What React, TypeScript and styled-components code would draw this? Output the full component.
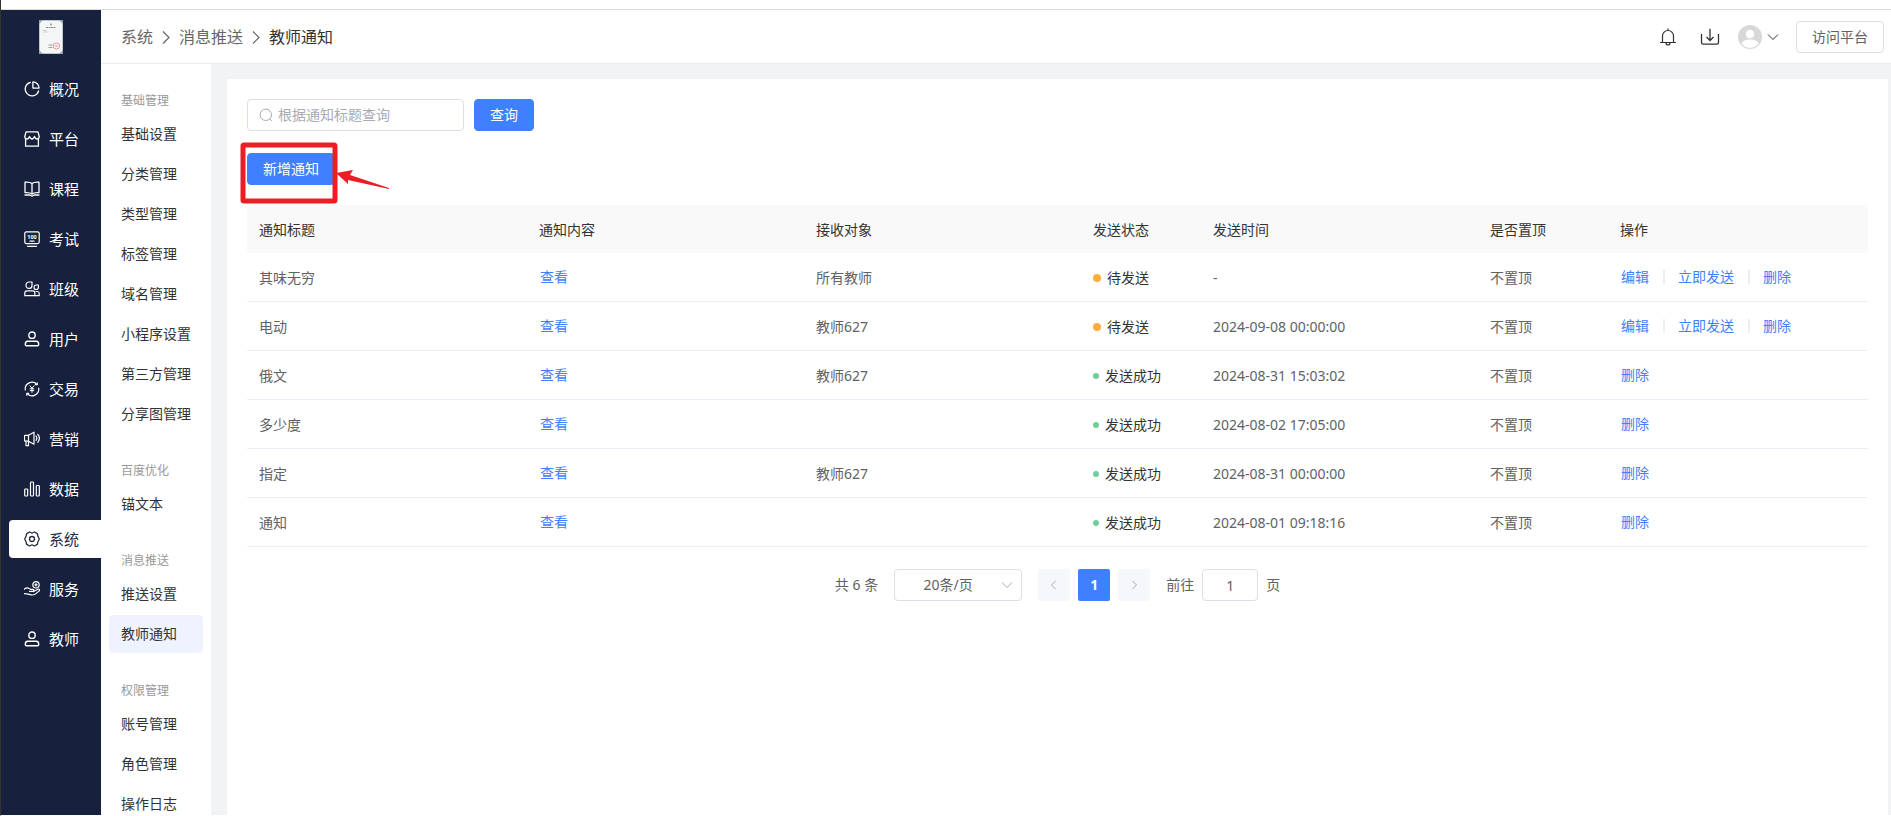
import React from "react";
import styled, { createGlobalStyle, css } from "styled-components";

const GlobalStyle = createGlobalStyle`
  *, *::before, *::after { box-sizing: border-box; }
  body {
    margin: 0;
    background: #fff;
    color: #333;
    font-family: "Noto Sans", "Noto Sans CJK SC", sans-serif;
    font-size: 14px;
    line-height: 20px;
  }
  button, input, select { font: inherit; margin: 0; }
  a { text-decoration: none; }
`;

/* ---------- shell ---------- */

const Shell = styled.div`
  display: flex;
  flex-direction: column;
  height: 100vh;
  overflow: hidden;
  border-left: 1px solid #333;
  border-bottom: 1px solid #fff;
`;

const TopEdge = styled.div`
  flex: none;
  height: 10px;
  border-bottom: 1px solid #dcdcdf;
`;

const Frame = styled.div`
  flex: 1;
  min-height: 0;
  display: flex;
`;

const Sidebar = styled.aside`
  flex: none;
  width: 100px;
  background: #17203d;
`;

const Logo = styled.a`
  display: flex;
  justify-content: center;
  height: 60px;
  padding-top: 10px;
`;

const MainNav = styled.nav`
  display: flex;
  flex-direction: column;
  gap: 12px;
  padding-left: 8px;
`;

const MainLink = styled.a<{ $active?: boolean }>`
  display: flex;
  align-items: center;
  gap: 9px;
  height: 38px;
  padding-left: 15px;
  border-radius: 4px 0 0 4px;
  font-size: 15px;
  color: ${(p) => (p.$active ? "#262d40" : "#fff")};
  background: ${(p) => (p.$active ? "#fff" : "transparent")};
`;

const Workspace = styled.div`
  flex: 1;
  min-width: 0;
  display: flex;
  flex-direction: column;
`;

const Body = styled.div`
  flex: 1;
  min-height: 0;
  display: flex;
  background: #f1f3f5;
`;

/* ---------- header ---------- */

const Header = styled.header`
  flex: none;
  display: flex;
  align-items: center;
  justify-content: space-between;
  height: 54px;
  padding: 0 7px 0 20px;
  border-bottom: 1px solid #ebedf2;
`;

const Crumbs = styled.nav`
  display: flex;
  align-items: center;
  gap: 8px;
  font-size: 16px;
  line-height: 24px;
  color: #333;

  a { color: #666; }
`;

const Tools = styled.div`
  display: flex;
  align-items: center;
`;

const IconButton = styled.button<{ $gap: number }>`
  display: flex;
  align-items: center;
  gap: 5px;
  padding: 0;
  border: 0;
  background: none;
  color: #333;
  cursor: pointer;
  margin-right: ${(p) => p.$gap}px;
`;

const Button = styled.button<{ $primary?: boolean }>`
  height: 32px;
  padding: 0 15px;
  border: 1px solid #dcdfe6;
  border-radius: 4px;
  background: #fff;
  color: #606266;
  cursor: pointer;
  ${(p) =>
    p.$primary &&
    css`
      border-color: #3e80ff;
      background: #3e80ff;
      color: #fff;
    `}
`;

/* ---------- secondary menu ---------- */

const SubMenu = styled.nav`
  flex: none;
  display: flex;
  flex-direction: column;
  gap: 26px;
  width: 110px;
  padding: 25px 8px;
  background: #fff;
  overflow-y: auto;
  scrollbar-width: none;
`;

const Group = styled.section`
  flex: none;
  display: flex;
  flex-direction: column;
  gap: 2px;
`;

const GroupTitle = styled.h2`
  margin: 0;
  padding-left: 12px;
  font-size: 12px;
  font-weight: 400;
  line-height: 24px;
  color: #999;
`;

const SubLink = styled.a<{ $active?: boolean }>`
  display: flex;
  align-items: center;
  height: 38px;
  padding-left: 12px;
  border-radius: 4px;
  white-space: nowrap;
  color: #333;
  background: ${(p) => (p.$active ? "#eff3ff" : "transparent")};
`;

/* ---------- content ---------- */

const Card = styled.main`
  flex: 1;
  min-width: 0;
  margin: 15px 3px 0 16px;
  padding: 20px;
  background: #fff;
  overflow: auto;
`;

const SearchRow = styled.form`
  display: flex;
  gap: 10px;
  margin-bottom: 22px;
`;

const SearchBox = styled.label`
  display: flex;
  align-items: center;
  gap: 5px;
  width: 217px;
  height: 32px;
  padding: 0 11px;
  border: 1px solid #dcdfe6;
  border-radius: 4px;
  color: #a8abb2;

  input {
    flex: 1;
    min-width: 0;
    padding: 0;
    border: 0;
    outline: 0;
    background: none;
    color: #606266;
  }
  input::placeholder { color: #a8abb2; opacity: 1; }
`;

const AddRow = styled.div`
  display: flex;
  margin-bottom: 20px;
`;

const Highlighted = styled.div`
  position: relative;
  display: flex;
`;

const Marker = styled.svg`
  position: absolute;
  left: -7px;
  top: -11px;
  pointer-events: none;
`;

const Table = styled.table`
  width: 100%;
  table-layout: fixed;
  border-collapse: separate;
  border-spacing: 0;

  th, td {
    padding: 2px 12px 0;
    text-align: left;
    font-weight: 400;
    white-space: nowrap;
  }
  th { height: 48px; background: #f9f9f9; color: #333; }
  td { height: 49px; border-bottom: 1px solid #ebeef5; color: #606266; }
  td:nth-child(2), td:last-child { padding-top: 0; }
`;

const TextLink = styled.a`
  padding-left: 1px;
  color: #3e80ff;
`;

const Status = styled.span<{ $sent: boolean }>`
  display: flex;
  align-items: center;
  gap: 6px;
  color: #333;

  &::before {
    content: "";
    width: ${(p) => (p.$sent ? 6 : 8)}px;
    height: ${(p) => (p.$sent ? 6 : 8)}px;
    border-radius: 50%;
    background: ${(p) => (p.$sent ? "#6fcf97" : "#ffad3b")};
  }
`;

const Actions = styled.div`
  display: flex;
  align-items: center;
`;

const Divider = styled.i`
  width: 2px;
  height: 14px;
  margin: 0 12px 0 14px;
  background: #eee;
`;

const Pager = styled.div`
  display: flex;
  align-items: center;
  justify-content: center;
  gap: 16px;
  margin-top: 22px;
  color: #606266;
`;

const PageGroup = styled.div`
  display: flex;
  align-items: center;
  gap: 8px;
`;

const SizeSelect = styled.span`
  position: relative;
  display: flex;

  select {
    width: 128px;
    height: 32px;
    padding: 0 20px 0 0;
    appearance: none;
    border: 1px solid #dcdfe6;
    border-radius: 4px;
    background: #fff;
    color: #606266;
    text-align: center;
    text-align-last: center;
  }
  svg {
    position: absolute;
    right: 9px;
    top: 10px;
    color: #a8abb2;
    pointer-events: none;
  }
`;

const PageButton = styled.button<{ $current?: boolean }>`
  display: flex;
  align-items: center;
  justify-content: center;
  width: 32px;
  height: 32px;
  padding: 0;
  border: 0;
  border-radius: 2px;
  font-weight: 700;
  background: ${(p) => (p.$current ? "#3e80ff" : "#f5f7fa")};
  color: ${(p) => (p.$current ? "#fff" : "#a8abb2")};
`;

const JumpLabel = styled.label`
  display: flex;
  align-items: center;
  gap: 8px;

  input {
    width: 56px;
    height: 32px;
    padding: 0;
    border: 1px solid #dcdfe6;
    border-radius: 4px;
    color: #606266;
    text-align: center;
  }
`;

/* ---------- drawings ---------- */

const Glyph = ({ children, w = 1.2 }: { children: React.ReactNode; w?: number }) => (
  <svg width="16" height="16" viewBox="0 0 16 16" fill="none" stroke="currentColor"
    strokeWidth={w} strokeLinejoin="round" strokeLinecap="round" aria-hidden="true">
    {children}
  </svg>
);

const person = (
  <Glyph w={1.4}>
    <circle cx="8" cy="4.2" r="3.2" />
    <path d="M3.5 10.2h9c1.2 0 2.2 1.6 2.2 3.2 0 .8-.4 1.3-1.2 1.3h-11c-.8 0-1.2-.5-1.2-1.3 0-1.6 1-3.2 2.2-3.2z" />
  </Glyph>
);

const icons: Record<string, React.ReactNode> = {
  overview: (
    <Glyph w={1.3}>
      <path d="M6.2 1.5A6.8 6.8 0 1 0 14.6 9.8" />
      <path d="M8.9.9v6.2h6.2A6.2 6.2 0 0 0 8.9.9z" />
    </Glyph>
  ),
  platform: (
    <Glyph w={1.3}>
      <path d="M2 .8h12l1.200 4.700c0 1.700-1 2.500-2.200 2.500-1.300 0-2-1-2.500-2.500C10 7 9.200 8 8 8S6 7 5.500 5.500C5 7 4.300 8 3 8 1.800 8 .8 7.200.8 5.500z" />
      <path d="M1.600 8v7.200h12.800V8" />
    </Glyph>
  ),
  course: (
    <Glyph w={1.3}>
      <path d="M8 2.600C6.500 1.200 4 1 1 1.200v10.400c3-.2 5.500.1 7 1.400 1.500-1.300 4-1.600 7-1.400V1.200C12 1 9.500 1.200 8 2.600zM8 2.600V13" />
      <path d="M1 14h4.500c1 0 1.500 1 2.500 1s1.500-1 2.500-1H15" />
    </Glyph>
  ),
  exam: (
    <Glyph w={1.2}>
      <rect x=".8" y=".8" width="14.400" height="11.800" rx="1.500" />
      <path d="M3.500 15.300h9" />
      <path d="M6 10.200h4" />
      <text x="8" y="8" fontSize="5.500" fontWeight="700" textAnchor="middle" fill="currentColor" stroke="none">100</text>
    </Glyph>
  ),
  classes: (
    <Glyph w={1.2}>
      <path d="M2 4.200C2 2.200 3.300 1 5 1h3v3.400c0 1.800-1.300 3-3 3s-3-1.300-3-3.200z" />
      <path d="M10 6.200c0-1.300 1-2.200 2.200-2.200h2.200v2.300c0 1.300-1 2.200-2.200 2.200S10 7.600 10 6.200z" />
      <path d="M3 9.800h6.200c1 0 1.600 1 1.600 2.300v2.600H.8v-2.600C.8 10.800 2 9.800 3 9.800z" />
      <path d="M12 10.500h1.400c1.200 0 1.800.8 1.800 1.900v2.300h-4" />
    </Glyph>
  ),
  user: person,
  trade: (
    <Glyph w={1.2}>
      <path d="M1.300 9A6.800 6.800 0 0 1 13 3.400M14.700 7A6.800 6.800 0 0 1 3 12.600" />
      <path d="M13.200 1.800v1.800h-1.800M2.800 14.200v-1.800h1.800" />
      <path d="M5.900 4.800L8 7.200l2.100-2.400M8 7.200v4.200M6.200 7.800h3.600M6.200 9.600h3.600" strokeWidth="1" />
    </Glyph>
  ),
  marketing: (
    <Glyph w={1.2}>
      <path d="M4.500 4.300L10 1.200v12L4.500 10.200" />
      <path d="M1.200 4.300h3.300v5.900H1.200c-.4 0-.7-.3-.7-.7V5c0-.4.3-.7.7-.7z" />
      <path d="M2 10.200v4.500h2.500v-4.500" />
      <path d="M12 5c.9 1.200.9 3.300 0 4.500M13.800 3.300c2 2.500 2 5.600 0 8" />
    </Glyph>
  ),
  data: (
    <Glyph w={1.2}>
      <rect x=".7" y="8" width="3" height="7" rx=".8" />
      <rect x="6.500" y="1" width="3" height="14" rx=".8" />
      <rect x="12.300" y="4.500" width="3" height="10.500" rx=".8" />
    </Glyph>
  ),
  system: (
    <Glyph w={1.3}>
      <path d="M5 1.200h1.200L8 2.200l1.800-1h1.200l2.500 1.700.3 2.100L15.300 8l-1.500 3-.3 2.100-2.500 1.700H9.800L8 13.800l-1.800 1H5l-2.500-1.700-.3-2.100L.7 8l1.500-3 .3-2.100z" />
      <circle cx="8" cy="8" r="2.500" />
    </Glyph>
  ),
  service: (
    <Glyph w={1.2}>
      <circle cx="12" cy="3.800" r="3.200" />
      <path d="M10.800 3.800h2.400M12 2.600V5" />
      <path d="M0 8.300c1.800-1.500 3.600-2 5.200-.8l1.200.8h2.400c1.500 0 1.500 2 0 2H5.500" />
      <path d="M9.500 10.500l4.300-2.300c1.500-.6 2.400.8 1.400 1.700-2.400 2.300-4.300 4.100-6.700 4.100-2.500 0-4.500-1.300-8-1.300" />
    </Glyph>
  ),
  teacher: person,
};

const LogoArt = () => (
  <svg width="24" height="34" viewBox="0 0 24 34" role="img" aria-label="证书">
    <rect width="24" height="34" fill="#b9c9c9" />
    <rect x="1" y="1" width="22" height="32" fill="#f4f6f6" />
    <path d="M0 0h4L0 4zM24 0h-4l4 4zM0 34h4l-4-4zM24 34h-4l4-4z" fill="#8ea9ac" />
    <circle cx="12" cy="4.500" r="1" fill="#999" />
    <path d="M7 7.500h10" stroke="#888" strokeWidth="1.200" strokeDasharray="2 .5" />
    <path d="M3.500 10.500h4M4.500 12h4" stroke="#bbb" strokeWidth=".7" />
    <path d="M9.500 25h4M9.500 27.500h4" stroke="#888" strokeWidth=".8" />
    <ellipse cx="17.500" cy="26" rx="3.300" ry="3" fill="none" stroke="#e58d92" strokeWidth=".9" />
    <path d="M16 26h3" stroke="#e58d92" />
  </svg>
);

const Chevron = ({ d, size = 12, w = 1.2 }: { d: string; size?: number; w?: number }) => (
  <svg width={size} height={size} viewBox="0 0 12 12" fill="none" stroke="currentColor" strokeWidth={w} aria-hidden="true">
    <path d={d} />
  </svg>
);
const RIGHT = "M4 1l5 5-5 5";
const LEFT = "M8 1L3 6l5 5";
const DOWN = "M1 3.500l5 5 5-5";

const CrumbArrow = () => (
  <svg width="10" height="14" viewBox="0 0 10 14" fill="none" stroke="#666" strokeWidth="1.200" aria-hidden="true">
    <path d="M2 1.500L8 7.500l-6 6" />
  </svg>
);

/* ---------- data ---------- */

const mainItems = [
  ["overview", "概况"], ["platform", "平台"], ["course", "课程"], ["exam", "考试"],
  ["classes", "班级"], ["user", "用户"], ["trade", "交易"], ["marketing", "营销"],
  ["data", "数据"], ["system", "系统"], ["service", "服务"], ["teacher", "教师"],
];

const groups = [
  { title: "基础管理", items: ["基础设置", "分类管理", "类型管理", "标签管理", "域名管理", "小程序设置", "第三方管理", "分享图管理"] },
  { title: "百度优化", items: ["锚文本"] },
  { title: "消息推送", items: ["推送设置", "教师通知"] },
  { title: "权限管理", items: ["账号管理", "角色管理", "操作日志"] },
];

const columns: [string, number?][] = [
  ["通知标题", 280], ["通知内容"], ["接收对象"], ["发送状态", 120],
  ["发送时间"], ["是否置顶", 130], ["操作", 260],
];

const rows = [
  { title: "其味无穷", target: "所有教师", sent: false, time: "-" },
  { title: "电动", target: "教师627", sent: false, time: "2024-09-08 00:00:00" },
  { title: "俄文", target: "教师627", sent: true, time: "2024-08-31 15:03:02" },
  { title: "多少度", target: "", sent: true, time: "2024-08-02 17:05:00" },
  { title: "指定", target: "教师627", sent: true, time: "2024-08-31 00:00:00" },
  { title: "通知", target: "", sent: true, time: "2024-08-01 09:18:16" },
];

export default function App() {
  return (
    <Shell>
      <GlobalStyle />
      <TopEdge />
      <Frame>
        <Sidebar>
          <Logo href="#home"><LogoArt /></Logo>
          <MainNav aria-label="主导航">
            {mainItems.map(([key, label]) => (
              <MainLink key={key} href={`#${key}`} $active={key === "system"}>
                {icons[key]}
                {label}
              </MainLink>
            ))}
          </MainNav>
        </Sidebar>

        <Workspace>
          <Header>
            <Crumbs aria-label="面包屑">
              <a href="#system">系统</a>
              <CrumbArrow />
              <a href="#push">消息推送</a>
              <CrumbArrow />
              <span>教师通知</span>
            </Crumbs>
            <Tools>
              <IconButton $gap={23} aria-label="消息">
                <svg width="18" height="18" viewBox="0 0 18 18" fill="none" stroke="currentColor" strokeWidth="1.200" aria-hidden="true">
                  <path d="M1 14.500h16M3.500 14.500V8a5.500 5.500 0 0 1 11 0v6.500M9 2.500V.5M7 15c0 1.300.8 2 2 2s2-.7 2-2" />
                </svg>
              </IconButton>
              <IconButton $gap={18} aria-label="下载">
                <svg width="20" height="18" viewBox="0 0 20 18" fill="none" stroke="currentColor" strokeWidth="1.300" aria-hidden="true">
                  <path d="M1.500 6v8.500c0 1 .6 1.600 1.600 1.600h13.800c1 0 1.600-.6 1.600-1.600V6M10 .8v11.400M6.500 9l3.500 3.500L13.500 9" />
                </svg>
              </IconButton>
              <IconButton $gap={17} aria-label="账户">
                <svg width="24" height="24" viewBox="0 0 24 24" aria-hidden="true">
                  <circle cx="12" cy="12" r="12" fill="#d8d8d8" />
                  <circle cx="12" cy="9" r="4.300" fill="#fff" />
                  <path d="M3.500 18.500C4.500 15.800 8 14.500 12 14.500s7.500 1.300 8.500 4C18.500 21.300 15.500 22.800 12 22.800s-6.500-1.500-8.500-4.300z" fill="#fff" />
                </svg>
                <Chevron d={DOWN} w={1} />
              </IconButton>
              <Button>访问平台</Button>
            </Tools>
          </Header>

          <Body>
            <SubMenu aria-label="系统菜单">
              {groups.map((g) => (
                <Group key={g.title}>
                  <GroupTitle>{g.title}</GroupTitle>
                  {g.items.map((item) => (
                    <SubLink key={item} href={`#${item}`} $active={item === "教师通知"}>{item}</SubLink>
                  ))}
                </Group>
              ))}
            </SubMenu>

            <Card>
              <SearchRow onSubmit={(e) => e.preventDefault()}>
                <SearchBox>
                  <svg width="14" height="14" viewBox="0 0 14 14" fill="none" stroke="currentColor" aria-hidden="true">
                    <circle cx="6.800" cy="6.800" r="5.700" />
                    <path d="M10.800 10.800l2.400 2.400" />
                  </svg>
                  <input type="text" placeholder="根据通知标题查询" aria-label="通知标题" />
                </SearchBox>
                <Button type="submit" $primary>查询</Button>
              </SearchRow>

              <AddRow>
                <Highlighted>
                  <Button type="button" $primary>新增通知</Button>
                  <Marker width="152" height="62" viewBox="0 0 152 62" aria-hidden="true">
                    <rect x="3" y="3" width="92" height="56" rx="1" fill="none" stroke="#ee1c25" strokeWidth="5" />
                    <path d="M96 31l17-3-3 5 39 13v1l-41-9v4z" fill="#ee1c25" />
                  </Marker>
                </Highlighted>
              </AddRow>

              <Table>
                <colgroup>
                  {columns.map(([name, width]) => <col key={name} width={width} />)}
                </colgroup>
                <thead>
                  <tr>{columns.map(([name]) => <th key={name} scope="col">{name}</th>)}</tr>
                </thead>
                <tbody>
                  {rows.map((r) => (
                    <tr key={r.title}>
                      <td>{r.title}</td>
                      <td><TextLink href="#view">查看</TextLink></td>
                      <td>{r.target}</td>
                      <td><Status $sent={r.sent}>{r.sent ? "发送成功" : "待发送"}</Status></td>
                      <td>{r.time}</td>
                      <td>不置顶</td>
                      <td>
                        <Actions>
                          {!r.sent && (
                            <>
                              <TextLink href="#edit">编辑</TextLink>
                              <Divider />
                              <TextLink href="#send">立即发送</TextLink>
                              <Divider />
                            </>
                          )}
                          <TextLink href="#delete">删除</TextLink>
                        </Actions>
                      </td>
                    </tr>
                  ))}
                </tbody>
              </Table>

              <Pager>
                <span>共 6 条</span>
                <SizeSelect>
                  <select aria-label="每页条数" defaultValue="20">
                    <option value="20">20条/页</option>
                  </select>
                  <Chevron d={DOWN} w={1} />
                </SizeSelect>
                <PageGroup>
                  <PageButton aria-label="上一页" disabled><Chevron d={LEFT} size={10} /></PageButton>
                  <PageButton $current>1</PageButton>
                  <PageButton aria-label="下一页" disabled><Chevron d={RIGHT} size={10} /></PageButton>
                </PageGroup>
                <JumpLabel>
                  前往
                  <input type="text" defaultValue="1" />
                  页
                </JumpLabel>
              </Pager>
            </Card>
          </Body>
        </Workspace>
      </Frame>
    </Shell>
  );
}
